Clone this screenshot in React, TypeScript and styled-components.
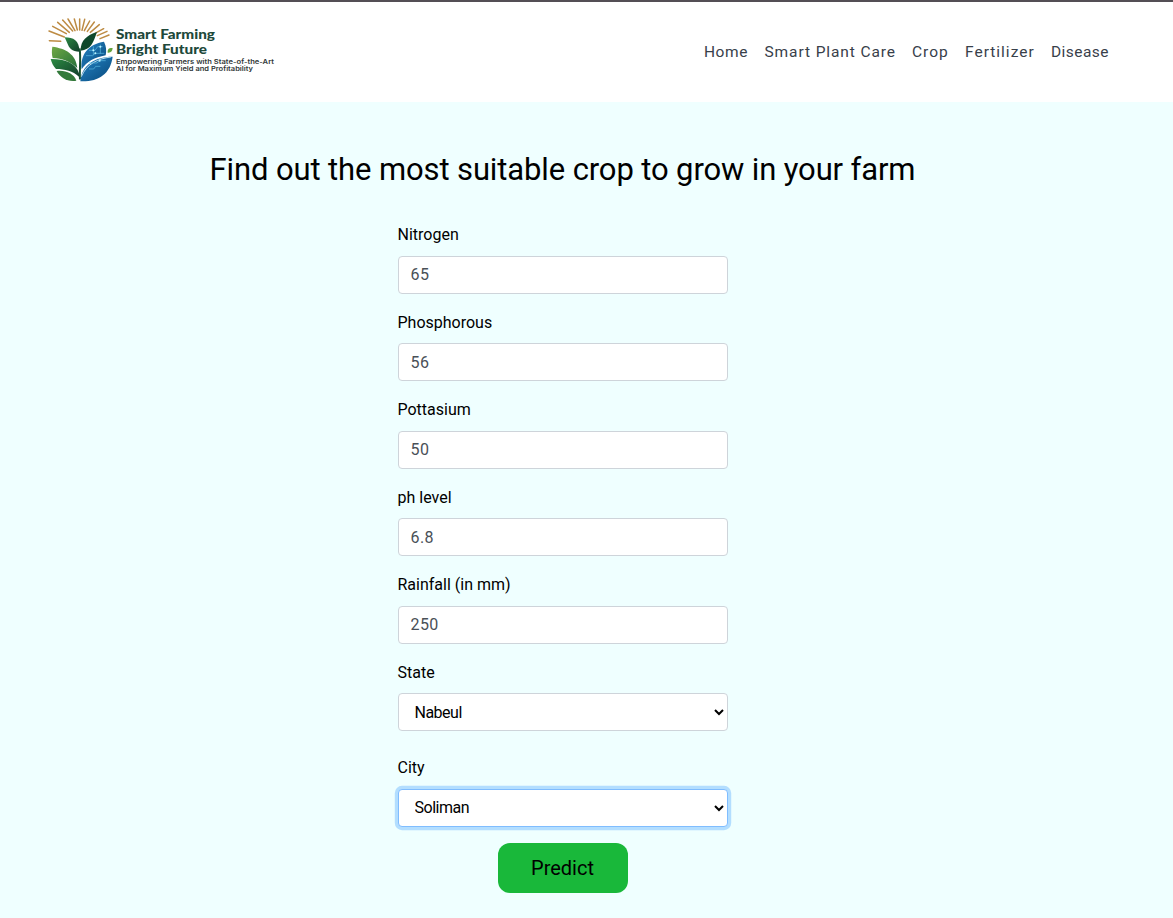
import React from 'react';
import styled, { createGlobalStyle } from 'styled-components';

const GlobalStyle = createGlobalStyle`
  *, *::before, *::after { box-sizing: border-box; }
  body {
    margin: 0;
    background: #efffff;
    color: #000;
    font-family: Roboto, "Noto Sans", sans-serif;
    font-size: 16px;
    overflow: hidden;
  }
`;

const Page = styled.div`
  min-height: 918px;
  background: #efffff;
`;

const Header = styled.header`
  display: flex;
  align-items: center;
  justify-content: space-between;
  height: 102px;
  padding: 0 64px 0 48px;
  border-top: 2px solid #544f55;
  background: #fff;
`;

const Logo = styled.svg`
  display: block;
  width: 230px;
  height: 70px;
  margin-bottom: 2px;
`;

const Nav = styled.nav`
  display: flex;
  gap: 16px;
`;

const NavLink = styled.a<{ $width: number; $tracking: number }>`
  width: ${(p) => p.$width}px;
  color: #38404a;
  font-size: 15.5px;
  line-height: 24px;
  letter-spacing: ${(p) => p.$tracking}px;
  white-space: nowrap;
  text-decoration: none;
`;

const Main = styled.main`
  display: flex;
  flex-direction: column;
  align-items: center;
  padding: 48px 48px 0 0;
`;

const Title = styled.h2`
  margin: 0 0 32px;
  font-size: 31px;
  font-weight: 400;
  line-height: 40px;
  letter-spacing: -0.12px;
  white-space: nowrap;
`;

const Form = styled.form`
  display: flex;
  flex-direction: column;
  align-items: center;
  width: 330px;
`;

const Field = styled.div<{ $gap?: number }>`
  width: 100%;
  margin-bottom: ${(p) => p.$gap ?? 16}px;
`;

const Label = styled.label`
  display: block;
  margin-bottom: 8px;
  font-size: 16px;
  line-height: 25.5px;
`;

const Input = styled.input`
  display: block;
  width: 100%;
  height: 38px;
  padding: 6px 12px;
  border: 1px solid #ced4da;
  border-radius: 4px;
  background: #fff;
  color: #495057;
  font: 16px Roboto, sans-serif;
  letter-spacing: 0.4px;
  outline: none;
`;

const Select = styled.select<{ $active?: boolean }>`
  display: block;
  width: 100%;
  height: 38px;
  padding: 6px 12px;
  border: 1px solid ${(p) => (p.$active ? '#80bdff' : '#ced4da')};
  border-radius: 4px;
  background: #fff;
  color: #000;
  font: 16px Roboto, sans-serif;
  letter-spacing: -0.5px;
  outline: none;
  box-shadow: ${(p) => (p.$active ? '0 0 0 3.2px rgba(0, 123, 255, 0.25)' : 'none')};
`;

const Submit = styled.button`
  width: 130px;
  height: 50px;
  padding: 0;
  border: 0;
  border-radius: 12px;
  background: #19b83a;
  color: #000;
  font: 20px Roboto, sans-serif;
`;

const rays = [
  [28, 122, 62, 124], [27, 93, 73, 111], [38, 79, 79, 101], [53, 67, 88, 97],
  [68, 60, 98, 93], [84, 57, 105, 92], [103, 57, 112, 90], [119, 57, 119, 90],
  [134, 58, 126, 91], [149, 63, 133, 92], [163, 66, 142, 94], [178, 74, 151, 97],
  [191, 86, 165, 100], [201, 94, 172, 107], [207, 105, 180, 116],
];

const LogoMark = () => (
  <Logo viewBox="0 0 230 70" role="img">
    <defs>
      <linearGradient id="leaf" x1="0" y1="0" x2="1" y2="1">
        <stop offset="0" stopColor="#6fa844" />
        <stop offset="1" stopColor="#24703a" />
      </linearGradient>
      <linearGradient id="deep" x1="0" y1="0" x2="1" y2="1">
        <stop offset="0" stopColor="#2c8a42" />
        <stop offset="1" stopColor="#123e2b" />
      </linearGradient>
      <linearGradient id="water" x1="0" y1="0" x2="1" y2="1">
        <stop offset="0" stopColor="#2584c4" />
        <stop offset="1" stopColor="#07487b" />
      </linearGradient>
    </defs>
    <g transform="translate(-8 -16) scale(0.33333)">
      <g stroke="#bd8b43" strokeWidth="4.5" strokeLinecap="round">
        {rays.map(([x1, y1, x2, y2]) => (
          <line key={x1} x1={x1} y1={y1} x2={x2} y2={y2} />
        ))}
      </g>
      <path d="M37 140C76 145 108 162 112 204C91 184 65 174 38 174C35 163 35 151 37 140Z" fill="url(#leaf)" />
      <path d="M32 177C70 176 108 188 117 220L117 230C98 213 75 207 48 207C40 199 35 188 32 177Z" fill="url(#deep)" />
      <path d="M50 213C77 210 101 220 109 242C83 246 61 234 50 213Z" fill="#33793a" />
      <path d="M74 112C101 112 117 121 119 155C95 155 88 145 82 130Z" fill="url(#deep)" />
      <path d="M171 96C140 106 122 121 122 152C153 149 160 128 171 96Z" fill="#0e482b" />
      <path d="M119 145C123 178 118 210 120 238" fill="none" stroke="#164f2f" strokeWidth="6" />
      <path d="M125 208C120 163 145 133 192 125C199 139 200 152 197 166C164 173 140 184 125 208Z" fill="url(#water)" />
      <path d="M121 244C124 197 162 170 218 170C211 222 175 246 121 244Z" fill="url(#water)" />
      <path d="M124 230C140 191 174 176 213 171" fill="none" stroke="#d7f1f8" strokeWidth="2.5" />
      <path d="M147 151h18l8-11h15M138 167h20l8-7h27M149 189h22l8-7h18M147 207h14l6-8h14M160 139v26M181 134v27" fill="none" stroke="#5dbbe2" strokeWidth="2" />
      <g fill="#b9f2ff">
        <circle cx="160" cy="151" r="3" />
        <circle cx="181" cy="140" r="3" />
        <circle cx="166" cy="160" r="3" />
        <circle cx="149" cy="189" r="3" />
        <circle cx="179" cy="182" r="3" />
      </g>
      <path d="M203 158C202 146 208 143 218 144C217 153 213 159 203 158Z" fill="#63a33a" />
    </g>
    <g fill="#20483a" fontFamily="Lato, sans-serif" fontWeight="900" fontSize="13.8">
      <text x="68" y="22.7" textLength="99" lengthAdjust="spacingAndGlyphs">Smart Farming</text>
      <text x="68" y="37.7" textLength="91" lengthAdjust="spacingAndGlyphs">Bright Future</text>
    </g>
    <g fill="#303737" fontFamily="Inter, sans-serif" fontWeight="600" fontSize="6.2">
      <text x="68" y="47.5" textLength="158" lengthAdjust="spacingAndGlyphs">Empowering Farmers with State-of-the-Art</text>
      <text x="68" y="55.2" textLength="137" lengthAdjust="spacingAndGlyphs">AI for Maximum Yield and Profitability</text>
    </g>
  </Logo>
);

const links = [
  { text: 'Home', width: 44.5, tracking: 0.55 },
  { text: 'Smart Plant Care', width: 131.5, tracking: 0.9 },
  { text: 'Crop', width: 37, tracking: 1 },
  { text: 'Fertilizer', width: 70, tracking: 1 },
  { text: 'Disease', width: 58, tracking: 0.45 },
];

const inputs = [
  ['Nitrogen', '65'],
  ['Phosphorous', '56'],
  ['Pottasium', '50'],
  ['ph level', '6.8'],
  ['Rainfall (in mm)', '250'],
];

export default function App() {
  return (
    <Page>
      <GlobalStyle />
      <Header>
        <LogoMark />
        <Nav>
          {links.map((l) => (
            <NavLink key={l.text} $width={l.width} $tracking={l.tracking}>{l.text}</NavLink>
          ))}
        </Nav>
      </Header>
      <Main>
        <Title>Find out the most suitable crop to grow in your farm</Title>
        <Form>
          {inputs.map(([label, value]) => (
            <Field key={label}>
              <Label>{label}</Label>
              <Input defaultValue={value} />
            </Field>
          ))}
          <Field $gap={24}>
            <Label>State</Label>
            <Select defaultValue="Nabeul"><option>Nabeul</option></Select>
          </Field>
          <Field>
            <Label>City</Label>
            <Select $active defaultValue="Soliman"><option>Soliman</option></Select>
          </Field>
          <Submit type="button">Predict</Submit>
        </Form>
      </Main>
    </Page>
  );
}
